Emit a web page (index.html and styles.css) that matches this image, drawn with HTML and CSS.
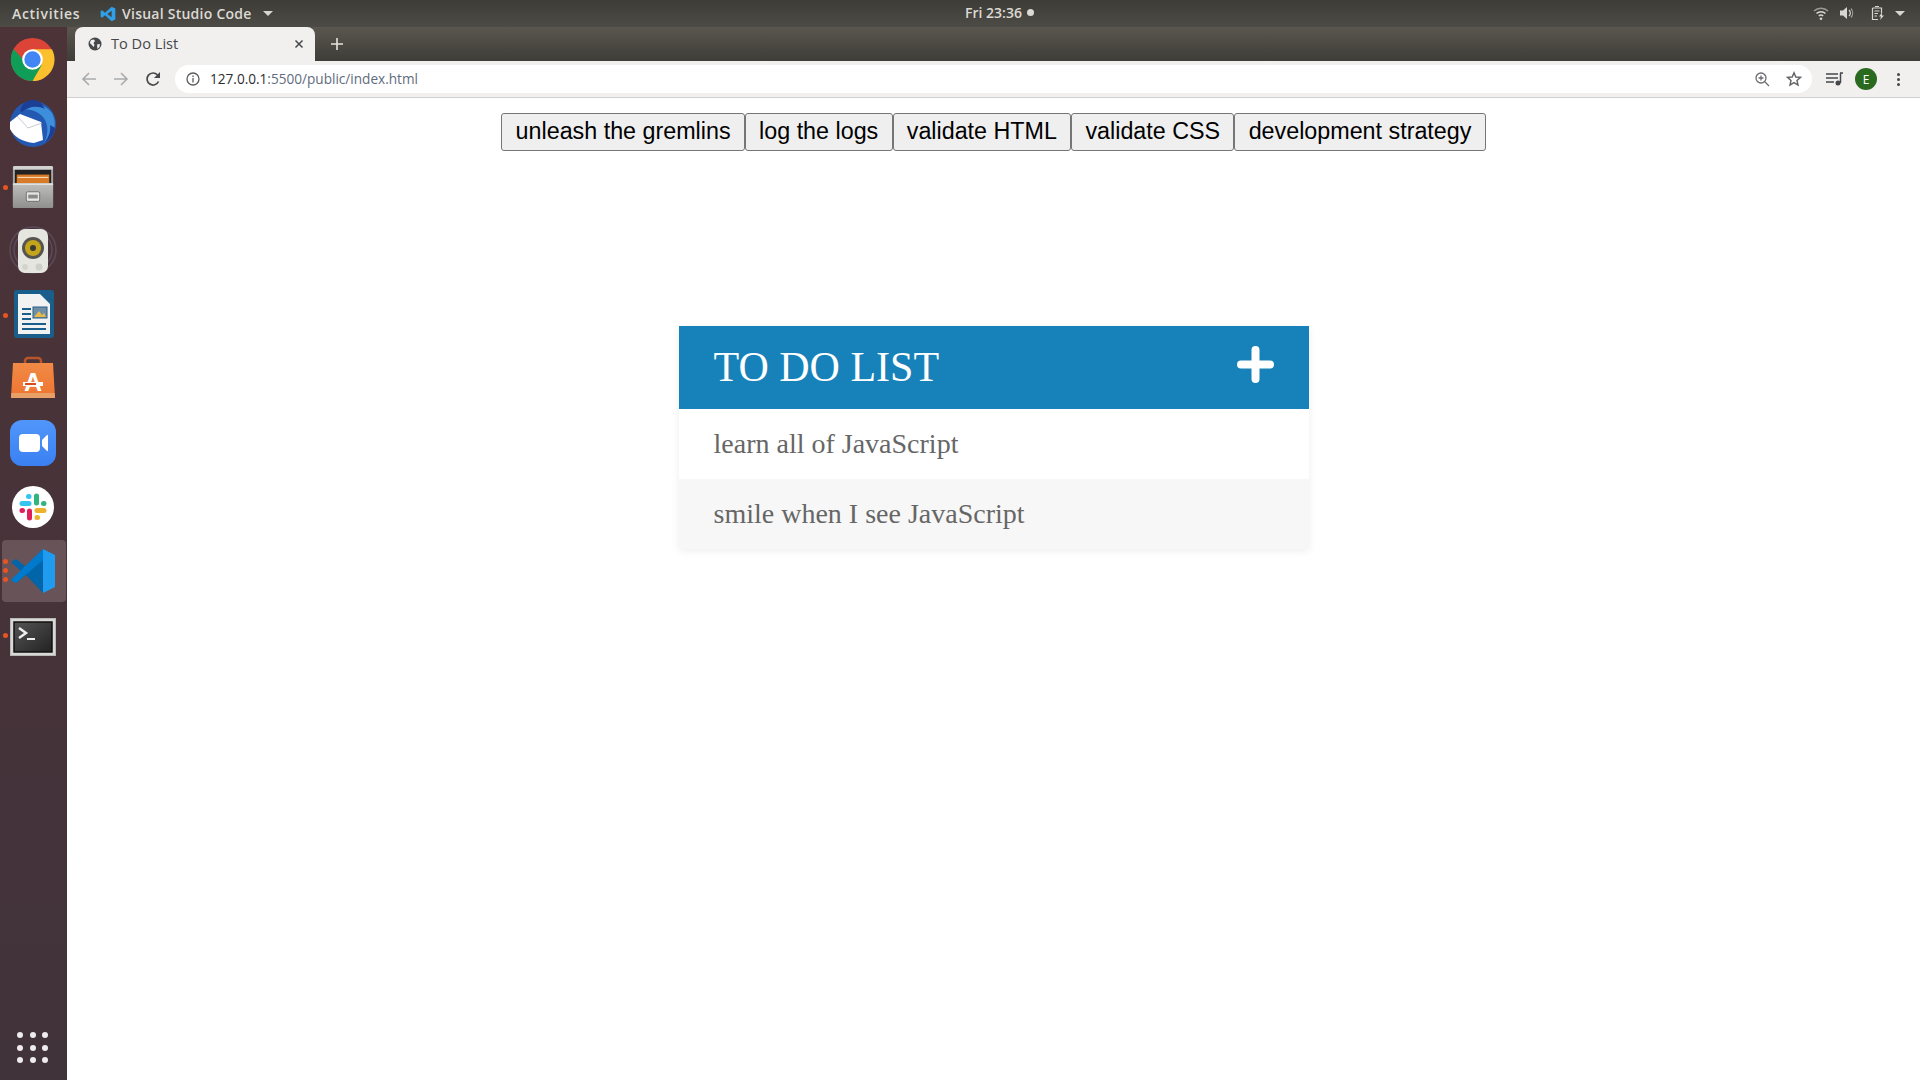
FILE: index.html
```html
<!DOCTYPE html>
<html lang="en">

<head>
  <meta charset="UTF-8" />
  <title>To Do List</title>
  <link rel="stylesheet" href="styles.css">
</head>

<body>
  <!-- Ubuntu top bar -->
  <div class="topbar">
    <div class="topbar-left">
      <span class="activities">Activities</span>
      <svg class="app-logo" width="16" height="16" viewBox="0 0 24 24"><path fill="#2f9fe8" d="M17.5 1 23 3.600V20.400L17.500 23 7.500 14 3 17.500 1 16V8L3 6.500 7.500 10ZM17.500 7 11 12 17.500 17Z"/></svg>
      <span class="app-name">Visual Studio Code</span>
      <span class="caret"></span>
    </div>
    <div class="clock">Fri 23:36<span class="clock-dot"></span></div>
    <div class="tray">
      <svg class="tray-wifi" width="16" height="16" viewBox="0 0 16 16" fill="none" stroke="#d8d6d0" stroke-width="1.500"><path d="M1 6a10 10 0 0 1 14 0" opacity=".6"/><path d="M3.500 8.500a6.500 6.500 0 0 1 9 0"/><path d="M5.800 11a3.300 3.300 0 0 1 4.400 0"/><circle cx="8" cy="13.800" r="1.300" fill="#d8d6d0" stroke="none"/></svg>
      <svg class="tray-sound" width="16" height="16" viewBox="0 0 16 16" fill="none" stroke="#d8d6d0" stroke-width="1.200"><path fill="#d8d6d0" stroke="none" d="M1 5.500H4L8 2V14L4 10.500H1Z"/><path d="M10 5a4 4 0 0 1 0 6"/><path d="M12 3.500a7 7 0 0 1 0 9" opacity=".6"/></svg>
      <svg class="tray-battery" width="16" height="16" viewBox="0 0 16 16" fill="none" stroke="#d8d6d0" stroke-width="1.200"><path d="M5 1.500H9M2.500 3H11.500V8M8 14.500H2.500V3"/><path stroke-width="1" d="M4.500 6H9.500M4.500 8.500H8M4.500 11H7"/><path fill="#d8d6d0" stroke="none" d="M12 7.500 9 11.500H11L10 15 14 10.500H12Z"/></svg>
      <span class="caret"></span>
    </div>
  </div>

  <div class="desktop">
    <!-- launcher -->
    <nav class="dock">
      <div class="dock-item">
        <svg width="45" height="45" viewBox="0 0 48 48"><circle cx="24" cy="24" r="23" fill="#db4437"/><path fill="#fbc02d" d="M24 13H44.700A23 23 0 0 1 24 47L34 24Z"/><path fill="#109d58" d="M3.800 12.800A23 23 0 0 0 24 47L34 29.500 24 35 14 24Z"/><circle cx="24" cy="24" r="11" fill="#fff"/><circle cx="24" cy="24" r="8.700" fill="#4285f4"/></svg>
      </div>
      <div class="dock-item">
        <svg width="50" height="50" viewBox="0 0 50 50"><circle cx="25" cy="26" r="23" fill="#2459b3"/><path fill="#3d8fdc" d="M12 12C20 3 36 4 44 15 50 26 46 38 36 45 41 36 41 24 33 17 27 12 19 10 12 12Z"/><path fill="#1c3f96" d="M12 13C14 4 22 0 30 3 34 5 35 8 37 11 28 7 20 9 14 14Z"/><path fill="#fff" d="M2 24 12 16 33 24 35 42 26 45C15 44 6 39 2 31Z"/><path fill="none" stroke="#b9bcc4" stroke-width=".8" d="M9 18 20 30 34 25"/><path fill="#1c3f96" d="M36 45C41 39 43 33 42 27L47 30C46 37 42 42 36 45Z"/></svg>
      </div>
      <div class="dock-item">
        <span class="run-dot"></span>
        <svg width="44" height="46" viewBox="0 0 46 46"><defs><linearGradient id="cabinet" x1="0" y1="0" x2="0" y2="1"><stop offset="0" stop-color="#bdbdbb"/><stop offset="1" stop-color="#8f8f8d"/></linearGradient></defs><rect x="2" y="1" width="42" height="44" rx="2" fill="#a9a9a7"/><rect x="2" y="1" width="42" height="4" rx="2" fill="#d2d2d0"/><rect x="4" y="5" width="38" height="14" fill="#222"/><rect x="6" y="10" width="34" height="9" fill="#d97a26"/><path stroke="#f6d7b4" stroke-width="1.200" d="M7 13H39"/><path fill="url(#cabinet)" d="M2 20H44V43a2 2 0 0 1-2 2H4a2 2 0 0 1-2-2Z"/><path fill="#e0e0de" d="M2 19H44V21H2Z"/><rect x="16" y="28" width="14" height="10" rx="1.500" fill="#e6e6e4" stroke="#6e6e6c"/><rect x="18" y="31" width="10" height="4" fill="#8a8a88"/></svg>
      </div>
      <div class="dock-item">
        <svg width="50" height="50" viewBox="0 0 50 50"><circle cx="25" cy="24" r="23" fill="none" stroke="#5b4a58" stroke-width="1.500"/><circle cx="25" cy="24" r="19" fill="none" stroke="#5a4a5e" stroke-width="1.500"/><rect x="10" y="3" width="30" height="44" rx="7" fill="#e6e6e0"/><circle cx="25" cy="22" r="11" fill="#55544e"/><circle cx="25" cy="22" r="8" fill="#c4a41a"/><circle cx="25" cy="22" r="3" fill="#3b3a30"/><circle cx="31" cy="41" r="3.500" fill="#cfcfc9"/><circle cx="17" cy="41" r="3" fill="#d4d4ce"/></svg>
      </div>
      <div class="dock-item">
        <span class="run-dot"></span>
        <svg width="46" height="50" viewBox="0 0 46 50"><path fill="#1a5f8c" d="M4 2a3 3 0 0 1 3-2H32L44 12V45a3 3 0 0 1-3 3H7a3 3 0 0 1-3-3Z"/><path fill="#f2f2f2" d="M8 4H30L40 14V44H8Z"/><path fill="#1a5f8c" d="M31 0H41a3 3 0 0 1 3 3V12Z"/><g fill="#1a5f8c"><rect x="12" y="18" width="9" height="2"/><rect x="12" y="23" width="9" height="2"/><rect x="12" y="28" width="9" height="2"/><rect x="12" y="33" width="24" height="2"/><rect x="12" y="38" width="24" height="2"/></g><rect x="23" y="17" width="14" height="11" fill="#6f8ea8" stroke="#2d5f86"/><path fill="#e6b94a" d="M24 27 29 21 32 25 34 23 36 27Z"/></svg>
      </div>
      <div class="dock-item">
        <svg width="46" height="46" viewBox="0 0 46 46"><defs><linearGradient id="bag" x1="0" y1="0" x2="0" y2="1"><stop offset="0" stop-color="#f08a45"/><stop offset="1" stop-color="#ee7530"/></linearGradient></defs><path fill="none" stroke="#b9552a" stroke-width="2.500" d="M15 15V5a3 3 0 0 1 3-3H28a3 3 0 0 1 3 3V15"/><path fill="url(#bag)" d="M3 7H43L45 42H1Z"/><path fill="#e8a067" d="M1.300 37H44.700L45 42H1Z"/><text class="store-a" x="23" y="35" text-anchor="middle">A</text><rect x="13" y="26" width="20" height="4" fill="#fff"/><rect x="15" y="27" width="11" height="2" fill="#d94d1c"/></svg>
      </div>
      <div class="dock-item">
        <svg width="46" height="46" viewBox="0 0 46 46"><defs><linearGradient id="zoomBg" x1="0" y1="0" x2="0" y2="1"><stop offset="0" stop-color="#5196fa"/><stop offset="1" stop-color="#3a80f2"/></linearGradient></defs><rect width="46" height="46" rx="12" fill="url(#zoomBg)"/><rect x="9" y="14" width="21" height="18" rx="4" fill="#fff"/><path fill="#fff" d="M32 20 37 15a.700.700 0 0 1 1 .500V30.500a.700.700 0 0 1-1 .500L32 26Z"/></svg>
      </div>
      <div class="dock-item">
        <svg width="42" height="42" viewBox="0 0 42 42"><circle cx="21" cy="21" r="21" fill="#fff"/><g fill="none" stroke-width="5" stroke-linecap="round"><path stroke="#36c5f0" d="M10 17.500H17M17 10.500h-.5"/><path stroke="#2eb67d" d="M24.500 10V17M31.500 17.500H32"/><path stroke="#ecb22e" d="M32 24.500H25M25 31.500h.5"/><path stroke="#e01e5a" d="M17.500 32V25M10.500 24.500H10"/></g></svg>
      </div>
      <div class="dock-item dock-item-active">
        <span class="run-dots"><span></span><span></span><span></span></span>
        <svg width="46" height="46" viewBox="0 0 46 46"><path fill="#0065a9" d="M33 1 16 19 6 11 1 14 11 23 1 32 6 35 16 27 33 45Z"/><path fill="#007acc" d="M33 1 6 27 1 32 6 35 33 12Z"/><path fill="#1f9cf0" d="M33 1 45 7V39L33 45Z"/></svg>
      </div>
      <div class="dock-item">
        <span class="run-dot"></span>
        <svg class="term-icon" width="46" height="38" viewBox="0 0 46 38"><defs><linearGradient id="termBg" x1="0" y1="0" x2="1" y2="1"><stop offset="0" stop-color="#555"/><stop offset="1" stop-color="#222"/></linearGradient></defs><rect x=".5" y=".5" width="45" height="37" fill="#d8d8d6" stroke="#b8b8b6"/><rect x="4" y="4" width="38" height="30" fill="url(#termBg)" stroke="#111" stroke-width="1.500"/><path fill="none" stroke="#eee" stroke-width="2.500" d="M9 10 16 15 9 20"/><rect x="17" y="20" width="8" height="2" fill="#eee"/></svg>
      </div>
      <div class="apps-grid">
        <span></span><span></span><span></span>
        <span></span><span></span><span></span>
        <span></span><span></span><span></span>
      </div>
    </nav>

    <div class="browser">
      <div class="tabstrip">
        <div class="tab">
          <svg width="14" height="14" viewBox="0 0 14 14"><circle cx="7" cy="7" r="6.500" fill="#45474a"/><path fill="#f1f0ef" d="M3 3 6 2.500 7 4 5.500 6 6.500 8 5.500 10 3.500 7.500 1.800 6ZM9 7.500 12 7 11.500 10 9.500 12Z"/></svg>
          <span class="tab-title">To Do List</span>
          <svg class="tab-close" width="10" height="10" viewBox="0 0 10 10" stroke="#45474a" stroke-width="1.500"><path d="M1.500 1.500 8.500 8.500M8.500 1.500 1.500 8.500"/></svg>
        </div>
        <svg class="new-tab" width="12" height="12" viewBox="0 0 12 12" stroke="#e6e4df" stroke-width="1.600"><path d="M6 0V12M0 6H12"/></svg>
      </div>

      <div class="toolbar">
        <svg class="tool-back" width="16" height="16" viewBox="0 0 16 16" fill="none" stroke="#a9abad" stroke-width="1.600"><path d="M15 8H2M8 2 2 8 8 14"/></svg>
        <svg class="tool-forward" width="16" height="16" viewBox="0 0 16 16" fill="none" stroke="#a9abad" stroke-width="1.600"><path d="M1 8H14M8 2 14 8 8 14"/></svg>
        <svg class="tool-reload" width="16" height="16" viewBox="0 0 16 16" fill="none" stroke="#45474a" stroke-width="1.700"><path d="M13.500 10.500A6 6 0 1 1 12.500 4"/><path fill="#45474a" stroke="none" d="M15 1V7H9Z"/></svg>
        <div class="omnibox">
          <svg class="info-icon" width="14" height="14" viewBox="0 0 14 14" fill="none" stroke="#5a5c5f" stroke-width="1.300"><circle cx="7" cy="7" r="6"/><path d="M7 6V10.500M7 3.500V5"/></svg>
          <span class="url"><span class="url-host">127.0.0.1</span>:5500/public/index.html</span>
          <svg class="omni-zoom" width="15" height="15" viewBox="0 0 15 15" fill="none" stroke="#6b6d70" stroke-width="1.300"><circle cx="6" cy="6" r="5"/><path d="M9.800 9.800 14 14M6 3.500V8.500M3.500 6H8.500"/></svg>
          <svg class="omni-star" width="16" height="16" viewBox="0 0 16 16" fill="none" stroke="#5f6164" stroke-width="1.400"><path d="M8 1.800 9.800 6 14.500 6.400 11 9.400 12 14 8 11.600 4 14 5 9.400 1.500 6.400 6.200 6Z"/></svg>
        </div>
        <svg class="tool-media" width="17" height="14" viewBox="0 0 17 14" fill="none" stroke="#45474a" stroke-width="1.500"><path d="M0 2H12M0 6H12M0 10H8M14.500 1V11"/><circle cx="12" cy="11" r="2.500" fill="#45474a" stroke="none"/><path d="M14 1H17"/></svg>
        <span class="avatar">E</span>
        <span class="chrome-menu"><span></span><span></span><span></span></span>
      </div>

      <main class="page">
        <div class="gremlin-bar">
          <button class="tool-btn">unleash the gremlins</button>
          <button class="tool-btn">log the logs</button>
          <button class="tool-btn">validate HTML</button>
          <button class="tool-btn">validate CSS</button>
          <button class="tool-btn">development strategy</button>
        </div>

        <section class="todo-card">
          <header class="todo-head">
            <h1 class="todo-title">TO DO LIST</h1>
            <svg class="todo-add" width="37" height="37" viewBox="0 0 37 37" fill="none" stroke="#fff" stroke-width="8" stroke-linecap="round" stroke-linejoin="round"><path d="M18.500 4V33M4 18.500H33"/></svg>
          </header>
          <div class="todo-item">learn all of JavaScript</div>
          <div class="todo-item">smile when I see JavaScript</div>
        </section>
      </main>
    </div>
  </div>
</body>

</html>
```

FILE: styles.css
```css
body {
  margin: 0;
  height: 100vh;
  overflow: hidden;
  display: flex;
  flex-direction: column;
  background-color: #fff;
  font-family: 'Open Sans', sans-serif;
}

/* Top bar */
.topbar {
  flex: 0 0 27px;
  display: flex;
  align-items: center;
  background: linear-gradient(#3e3c37, #4d4b45);
  color: #dcdad4;
  font-size: 14px;
  font-weight: 600;
}

.topbar-left {
  flex: 0 0 965px;
  box-sizing: border-box;
  padding-left: 12px;
  display: flex;
  align-items: center;
}

.activities {
  width: 88px;
  letter-spacing: 0.7px;
}

.app-logo {
  margin-right: 6px;
}

.app-name {
  width: 141px;
  letter-spacing: 0.25px;
}

.caret {
  width: 0;
  height: 0;
  border-left: 5px solid transparent;
  border-right: 5px solid transparent;
  border-top: 5px solid #d8d6d0;
}

.clock {
  padding-bottom: 2px;
  display: flex;
  align-items: center;
  font-size: 14px;
}

.clock-dot {
  width: 7px;
  height: 7px;
  margin-left: 5px;
  border-radius: 50%;
  background-color: #dcdad4;
}

.tray {
  margin-left: auto;
  padding-right: 15px;
  padding-bottom: 1px;
  display: flex;
  align-items: center;
  gap: 10px;
}

.tray-battery {
  margin-left: 5px;
}

.tray-battery + .caret {
  margin-left: -1px;
}

/* Desktop */
.desktop {
  flex: 1;
  min-height: 0;
  display: flex;
}

.dock {
  flex: 0 0 67px;
  position: relative;
  display: flex;
  flex-direction: column;
  background: linear-gradient(#4c3338, #41333a);
}

.dock-item {
  position: relative;
  flex: 0 0 64px;
  box-sizing: border-box;
  padding-right: 2px;
  display: flex;
  align-items: center;
  justify-content: center;
}

.dock-item-active::before {
  content: "";
  position: absolute;
  top: 1px;
  bottom: 1px;
  left: 2px;
  right: 1px;
  border-radius: 4px;
  background-color: #675358;
}

.dock-item svg {
  position: relative;
}

.term-icon {
  margin-top: 4px;
}

.run-dot {
  position: absolute;
  left: 3px;
  top: 30px;
  width: 5px;
  height: 5px;
  border-radius: 50%;
  background-color: #e95420;
  z-index: 1;
}

.run-dots {
  position: absolute;
  left: 3px;
  top: 20px;
  display: flex;
  flex-direction: column;
  gap: 4px;
  z-index: 1;
}

.run-dots span {
  width: 5px;
  height: 5px;
  border-radius: 50%;
  background-color: #e95420;
}

.apps-grid {
  margin-top: auto;
  margin-bottom: 17px;
  margin-right: 2px;
  align-self: center;
  display: grid;
  grid-template-columns: repeat(3, 6px);
  gap: 6.5px;
}

.apps-grid span {
  width: 6px;
  height: 6px;
  border-radius: 50%;
  background-color: #eeecec;
}

.store-a {
  font-family: 'Liberation Sans', sans-serif;
  font-size: 25px;
  font-weight: bold;
  fill: #fff;
}

/* Browser */
.browser {
  flex: 1;
  min-width: 0;
  display: flex;
  flex-direction: column;
}

.tabstrip {
  flex: 0 0 34px;
  display: flex;
  align-items: center;
  background: linear-gradient(#5a564f, #3f3d38);
}

.tab {
  align-self: stretch;
  width: 240px;
  margin-left: 8px;
  box-sizing: border-box;
  padding: 0 11px 0 13px;
  display: flex;
  align-items: center;
  border-radius: 8px 8px 0 0;
  background-color: #f1f0ef;
  color: #45474a;
  font-size: 14.6px;
}

.tab-title {
  margin-left: 9px;
  padding-bottom: 2px;
}

.tab-close {
  margin-left: auto;
}

.new-tab {
  margin-left: 16px;
}

.toolbar {
  flex: 0 0 37px;
  box-sizing: border-box;
  display: flex;
  align-items: center;
  border-bottom: 1px solid #cfcfcf;
  background-color: #f1f0ef;
}

.tool-back {
  margin-left: 14px;
}

.tool-forward {
  margin-left: 16px;
}

.tool-reload {
  margin-left: 16px;
}

.omnibox {
  width: 1637px;
  height: 28px;
  margin-left: 14px;
  box-sizing: border-box;
  padding: 0 10px 0 11px;
  display: flex;
  align-items: center;
  border-radius: 14px;
  background-color: #fff;
  font-size: 13.6px;
  color: #5f6c7d;
}

.url {
  margin-left: 10px;
  padding-bottom: 2px;
}

.url-host {
  color: #2c2d30;
}

.omni-zoom {
  margin-left: auto;
}

.omni-star {
  margin-left: 16px;
}

.tool-media {
  margin-left: 14px;
}

.avatar {
  width: 22px;
  height: 22px;
  margin-left: 12px;
  display: flex;
  align-items: center;
  justify-content: center;
  border-radius: 50%;
  background-color: #2a6a1f;
  color: #fff;
  font-size: 12px;
}

.chrome-menu {
  margin-left: 20px;
  display: flex;
  flex-direction: column;
  gap: 2px;
}

.chrome-menu span {
  width: 3px;
  height: 3px;
  border-radius: 50%;
  background-color: #45474a;
}

/* Page */
.page {
  flex: 1;
  display: flex;
  flex-direction: column;
  align-items: center;
  padding-top: 15px;
}

.gremlin-bar {
  display: flex;
}

.tool-btn {
  height: 38px;
  padding: 0 13.25px 2px;
  border: 1px solid #767676;
  border-radius: 3px;
  background-color: #efefef;
  color: #000;
  font-family: 'Liberation Sans', sans-serif;
  font-size: 23.3px;
}

.todo-card {
  width: 630px;
  margin-top: 175px;
  border-radius: 3px;
  background-color: #fff;
  box-shadow: 0 2px 8px rgba(0, 0, 0, 0.07);
  font-family: 'Liberation Serif', serif;
}

.todo-head {
  height: 83px;
  box-sizing: border-box;
  padding: 0 35px 2px;
  display: flex;
  align-items: center;
  justify-content: space-between;
  background-color: #1782b9;
  color: #fff;
}

.todo-title {
  margin: 0;
  font-size: 42px;
  font-weight: normal;
}

.todo-add {
  margin-top: -5px;
}

.todo-item {
  height: 70px;
  box-sizing: border-box;
  padding: 0 35px;
  display: flex;
  align-items: center;
  color: #666;
  font-size: 28px;
}

.todo-item:nth-child(odd) {
  background-color: #f7f7f7;
}
```
